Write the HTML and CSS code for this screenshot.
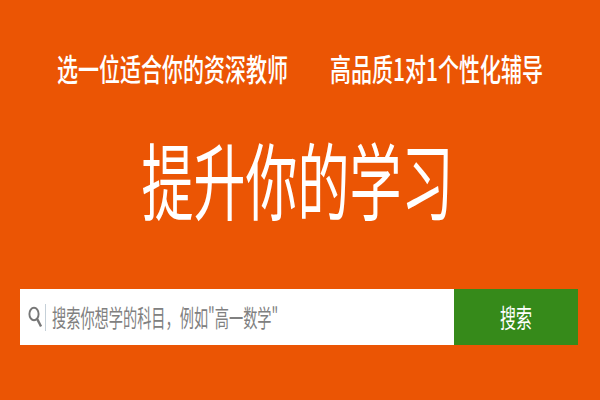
FILE: index.html
```html
<!DOCTYPE html>
<html lang="zh">
<head>
<meta charset="utf-8">
<title>提升你的学习</title>
<link rel="stylesheet" href="styles.css">
</head>
<body>
<main class="hero">
  <div class="tagline">
    <span class="stretch">选一位适合你的资深教师</span>
    <span class="stretch">高品质1对1个性化辅导</span>
  </div>
  <h1 class="headline"><span class="stretch-big">提升你的学习</span></h1>
  <form class="search">
    <div class="field">
      <svg class="icon" width="14" height="22" viewBox="0 0 14 22" aria-hidden="true">
        <ellipse cx="6" cy="8" rx="4.6" ry="6.2" fill="none" stroke="#777" stroke-width="1.9"/>
        <path d="M9.2 13 13 20.5" stroke="#777" stroke-width="2.4" fill="none"/>
      </svg>
      <span class="divider"></span>
      <span class="placeholder">搜索你想学的科目，例如"高一数学"</span>
    </div>
    <button class="submit" type="button"><span>搜索</span></button>
  </form>
</main>
</body>
</html>
```
FILE: styles.css
```css
html, body {
  margin: 0;
  padding: 0;
}
body {
  width: 600px;
  height: 400px;
  overflow: hidden;
  background: #eb5504;
  font-family: "Noto Sans CJK SC", "Liberation Sans", sans-serif;
}
.hero {
  display: flex;
  flex-direction: column;
  height: 400px;
  box-sizing: border-box;
  padding: 50px 22px 55px 20px;
}
.tagline {
  display: flex;
  justify-content: center;
  gap: 42px;
  height: 36px;
  padding-left: 2px;
  font-size: 21px;
  font-weight: 500;
  line-height: 36px;
  color: #fff;
}
.stretch {
  display: block;
  transform: scaleY(1.45);
}
.headline {
  margin: 52px 0 0;
  height: 80px;
  padding-right: 3px;
  font-size: 52px;
  font-weight: 400;
  line-height: 80px;
  text-align: center;
  color: #fff;
}
.stretch-big {
  display: block;
  transform: scaleY(1.62);
}
.search {
  display: flex;
  height: 56px;
  margin-top: auto;
}
.field {
  flex: 1;
  display: flex;
  align-items: center;
  background: #fff;
  padding-left: 7px;
}
.icon {
  flex: none;
  margin-left: 1px;
}
.divider {
  width: 1px;
  height: 27px;
  margin: 0 6px 0 3px;
  background: #c5d0d8;
}
.placeholder {
  font-size: 14.2px;
  color: #808080;
  white-space: nowrap;
  display: block;
  transform: scaleY(1.65);
}
.submit {
  flex: none;
  width: 124px;
  height: 56px;
  border: 0;
  padding: 0;
  background: #368a1a;
  color: #fff;
  font-family: inherit;
  font-size: 16px;
}
.submit span {
  display: block;
  transform: scaleY(1.6);
}
```
